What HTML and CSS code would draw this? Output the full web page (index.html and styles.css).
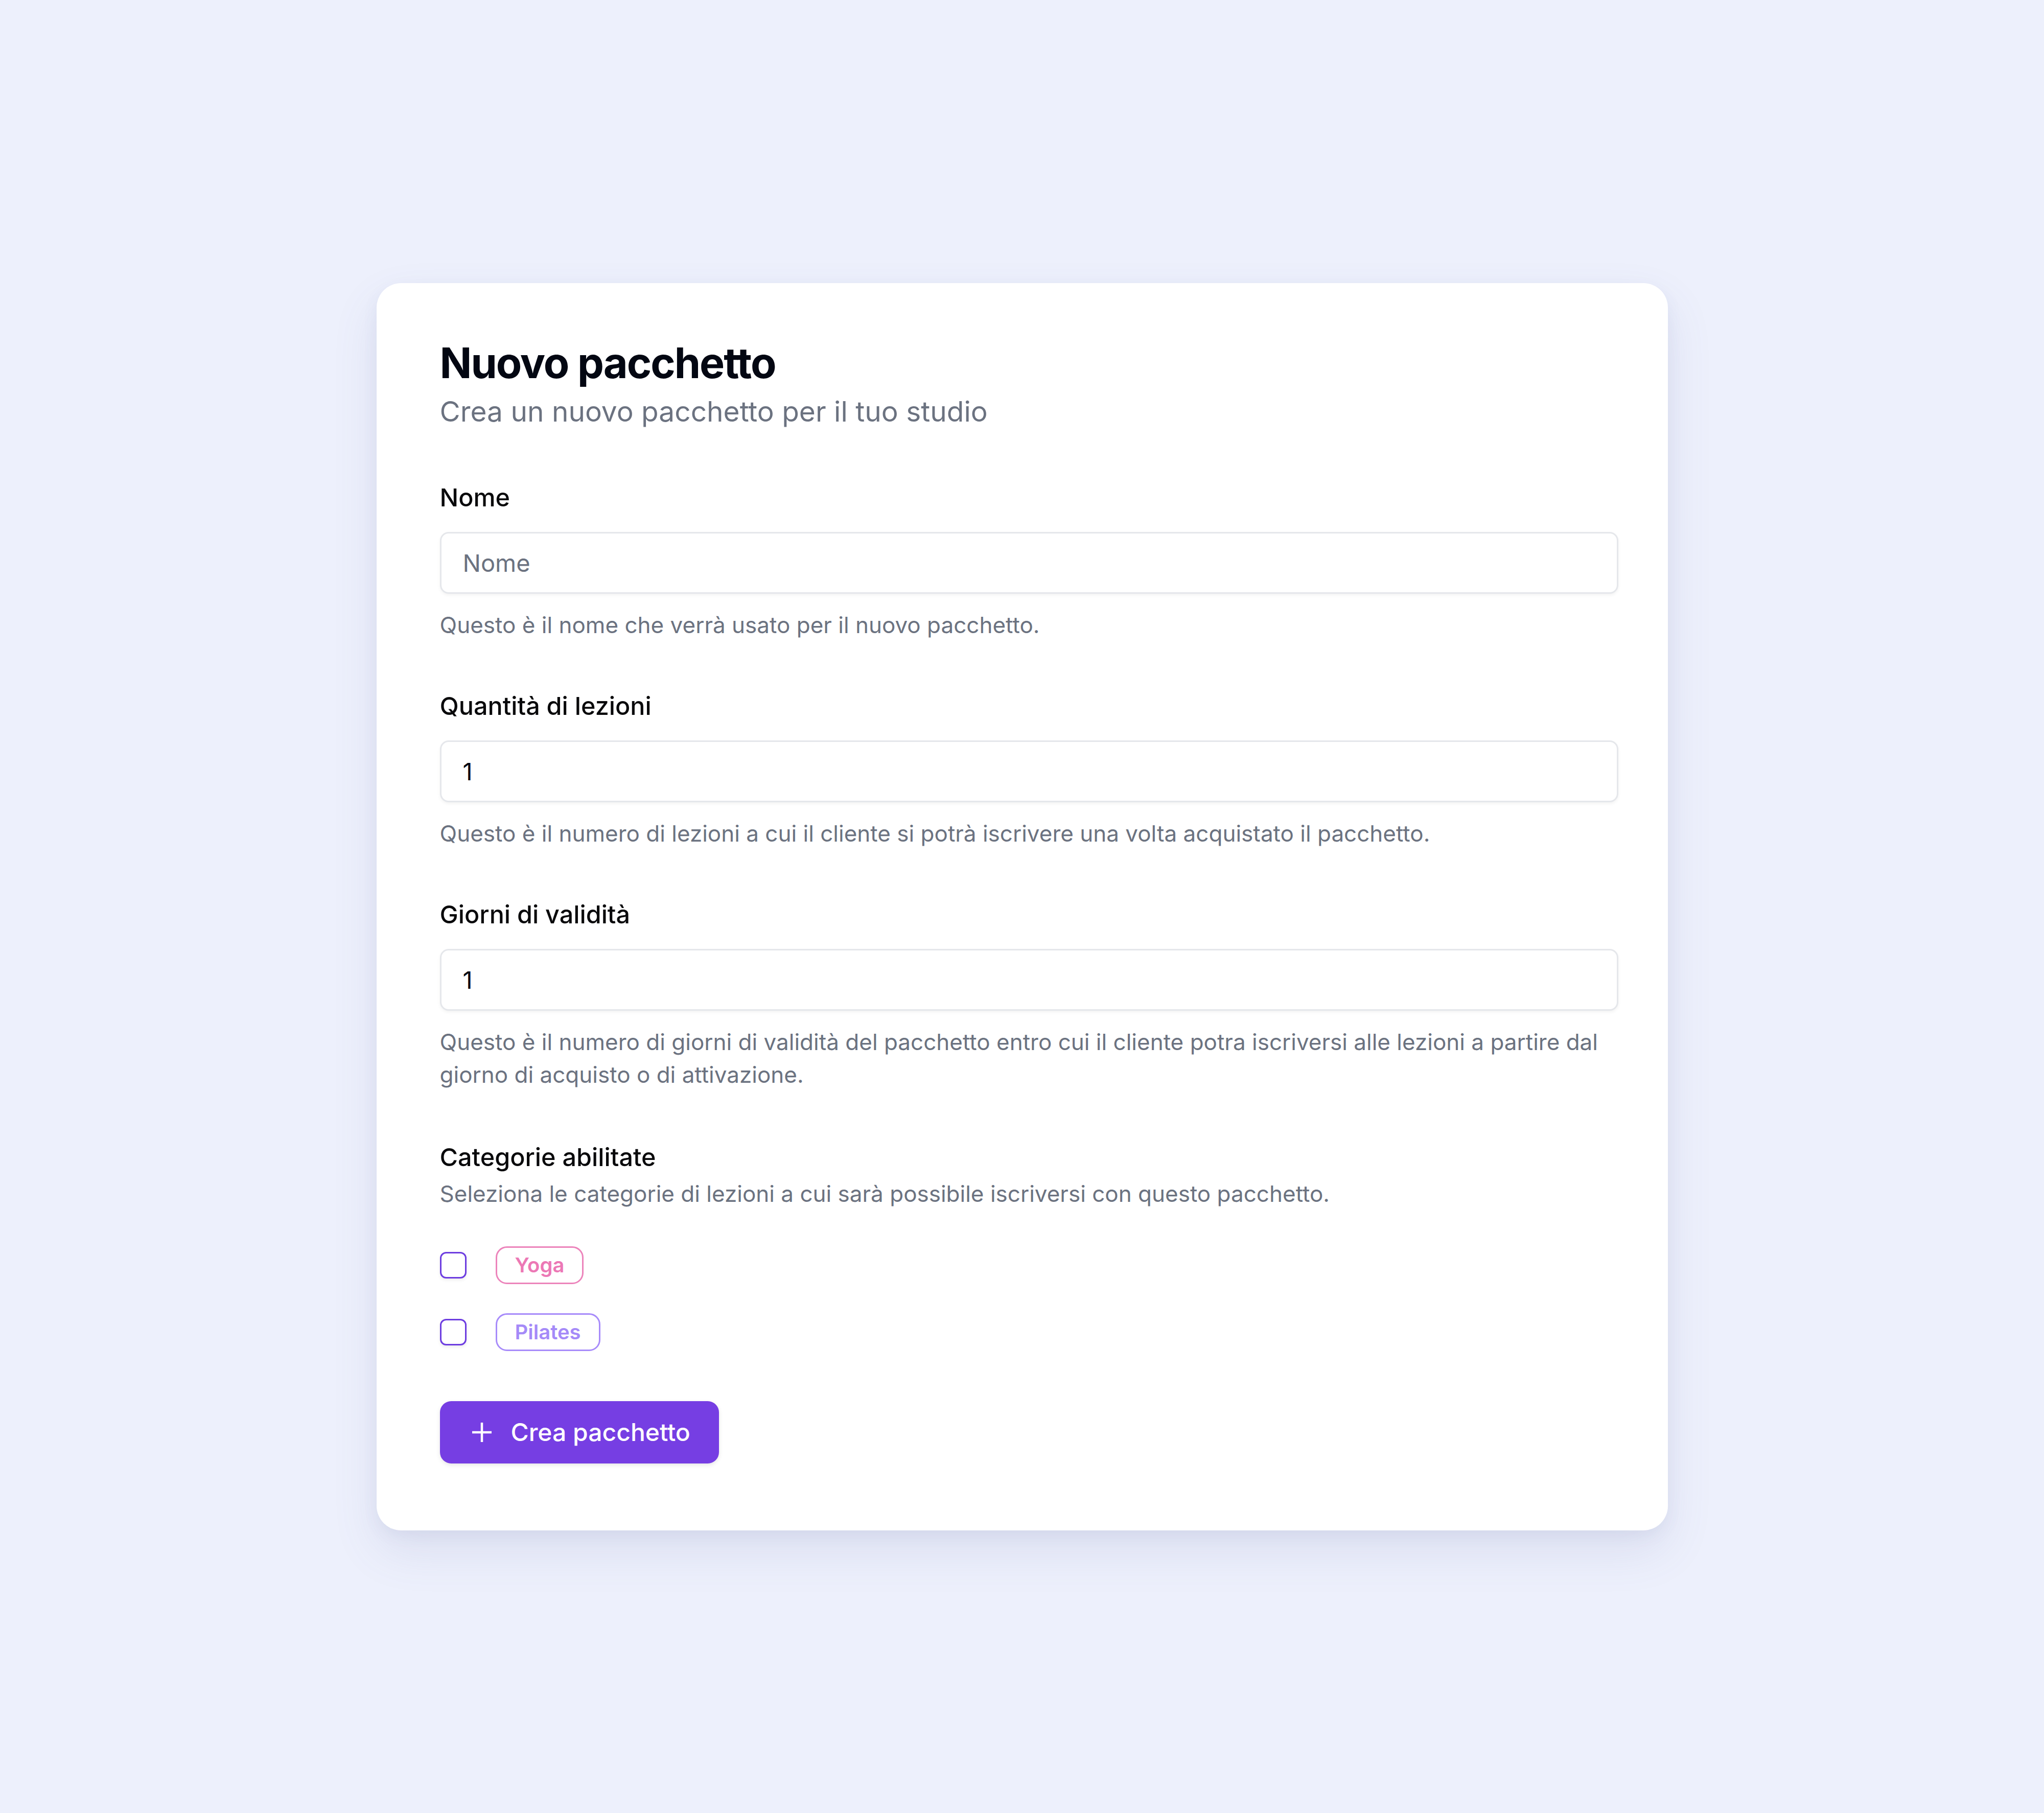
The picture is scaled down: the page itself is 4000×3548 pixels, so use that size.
FILE: index.html
```html
<!DOCTYPE html>
<html lang="it">
<head>
<meta charset="utf-8">
<title>Nuovo pacchetto</title>
<link rel="stylesheet" href="styles.css">
</head>
<body>
<main class="card">
  <header class="head">
    <h1 class="title">Nuovo pacchetto</h1>
    <p class="subtitle">Crea un nuovo pacchetto per il tuo studio</p>
  </header>
  <form class="form">
    <div class="field">
      <label class="label" for="nome">Nome</label>
      <input class="input" id="nome" type="text" placeholder="Nome">
      <p class="help">Questo è il nome che verrà usato per il nuovo pacchetto.</p>
    </div>
    <div class="field">
      <label class="label" for="lezioni">Quantità di lezioni</label>
      <input class="input" id="lezioni" type="text" value="1">
      <p class="help">Questo è il numero di lezioni a cui il cliente si potrà iscrivere una volta acquistato il pacchetto.</p>
    </div>
    <div class="field">
      <label class="label" for="giorni">Giorni di validità</label>
      <input class="input" id="giorni" type="text" value="1">
      <p class="help">Questo è il numero di giorni di validità del pacchetto entro cui il cliente potra iscriversi alle lezioni a partire dal giorno di acquisto o di attivazione.</p>
    </div>
    <div class="field cats">
      <div class="label">Categorie abilitate</div>
      <p class="help tight">Seleziona le categorie di lezioni a cui sarà possibile iscriversi con questo pacchetto.</p>
      <div class="options">
        <label class="option"><span class="checkbox"></span><span class="badge pink">Yoga</span></label>
        <label class="option"><span class="checkbox"></span><span class="badge violet">Pilates</span></label>
      </div>
    </div>
    <button class="button" type="button">
      <svg class="plus" width="38" height="38" viewBox="0 0 38 38" aria-hidden="true"><path d="M0 19H38M19 0V38" fill="none" stroke="#fff" stroke-width="4.5"/></svg>
      <span>Crea pacchetto</span>
    </button>
  </form>
</main>
</body>
</html>
```
FILE: styles.css
```css
html, body {
  margin: 0;
  padding: 0;
}
body {
  background: #edf0fc;
  min-height: 100vh;
  display: flex;
  align-items: center;
  justify-content: center;
  font-family: Inter, "Noto Sans", "Liberation Sans", sans-serif;
}
.card {
  width: 2527px;
  box-sizing: border-box;
  padding: 107px 97px 131px 124px;
  background: #ffffff;
  border-radius: 48px;
  box-shadow: 0 40px 90px rgba(90, 100, 160, 0.12), 0 10px 30px rgba(90, 100, 160, 0.07);
}
.title {
  margin: 0;
  font-size: 82.5px;
  line-height: 99px;
  font-weight: 700;
  color: #030712;
  letter-spacing: -2px;
}
.subtitle {
  margin: 7px 0 0;
  font-size: 55px;
  line-height: 77px;
  color: #6b7280;
}
.form {
  margin-top: 97px;
}
.field {
  display: flex;
  flex-direction: column;
}
.field + .field {
  margin-top: 94px;
}
.field.cats {
  margin-top: 97px;
}
.label {
  font-size: 48.5px;
  line-height: 66px;
  font-weight: 500;
  color: #09090b;
}
.input {
  margin-top: 34px;
  height: 121px;
  width: 100%;
  box-sizing: border-box;
  border: 3px solid #e5e7eb;
  border-radius: 17px;
  padding: 0 42px;
  font-family: inherit;
  font-size: 47px;
  color: #030712;
  background: #fff;
  box-shadow: 0 3px 6px rgba(0, 0, 0, 0.05);
  outline: none;
}
.input::placeholder {
  color: #6b7280;
}
.help {
  margin: 29px 0 0;
  font-size: 44px;
  line-height: 64px;
  color: #6b7280;
}
.help.tight {
  margin-top: 6px;
}
.options {
  margin-top: 71px;
  display: flex;
  flex-direction: column;
  gap: 57px;
}
.option {
  display: flex;
  align-items: center;
  gap: 57px;
}
.checkbox {
  width: 52px;
  height: 52px;
  box-sizing: border-box;
  border: 3.5px solid #6d3de0;
  border-radius: 12px;
  box-shadow: 0 3px 6px rgba(0, 0, 0, 0.08);
}
.badge {
  display: inline-flex;
  align-items: center;
  height: 74px;
  box-sizing: border-box;
  padding: 0 35px;
  border: 3px solid;
  border-radius: 22px;
  font-size: 40px;
  font-weight: 600;
}
.badge.pink {
  color: #ec78b5;
  border-color: #ec84bb;
}
.badge.violet {
  color: #a58af8;
  border-color: #a78bfa;
}
.button {
  margin-top: 98px;
  height: 122px;
  display: inline-flex;
  align-items: center;
  gap: 38px;
  padding: 0 56px 0 63px;
  border: none;
  border-radius: 22px;
  background: #763ee3;
  color: #fff;
  font-family: inherit;
  font-size: 48px;
  font-weight: 500;
  box-shadow: 0 3px 8px rgba(0, 0, 0, 0.1);
}
.plus {
  display: block;
}
```
